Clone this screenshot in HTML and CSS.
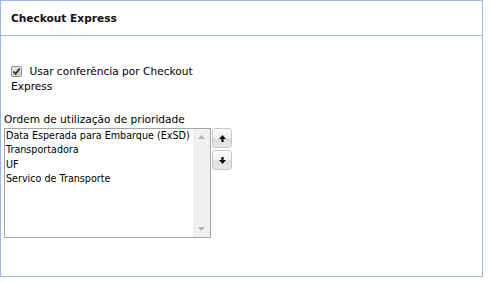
FILE: index.html
```html
<!DOCTYPE html>
<html lang="pt">
<head>
<meta charset="utf-8">
<title>Checkout Express</title>
<link rel="stylesheet" href="styles.css">
</head>
<body>
<div class="panel">
  <div class="panel-header">Checkout Express</div>
  <div class="panel-body">
    <label class="check-field">
      <span class="checkbox"><svg width="9" height="9" viewBox="0 0 9 9"><path d="M1.5 4.5 L3.6 6.8 L7.6 1.6" fill="none" stroke="#333" stroke-width="1.8"/></svg></span>
      <span class="check-label">Usar conferência por Checkout Express</span>
    </label>
    <div class="list-field">
      <div class="field-label">Ordem de utilização de prioridade</div>
      <div class="list-row">
        <div class="listbox">
          <ul class="items">
            <li>Data Esperada para Embarque (ExSD)</li>
            <li>Transportadora</li>
            <li>UF</li>
            <li>Servico de Transporte</li>
          </ul>
          <div class="scrollbar">
            <svg class="scroll-arrow" width="7" height="4" viewBox="0 0 7 4"><path d="M0 4 L3.5 0 L7 4 Z" fill="#b4b4b4"/></svg>
            <svg class="scroll-arrow" width="7" height="4" viewBox="0 0 7 4"><path d="M0 0 L3.5 4 L7 0 Z" fill="#b4b4b4"/></svg>
          </div>
        </div>
        <div class="order-buttons">
          <button class="order-btn" type="button" aria-label="Mover para cima"><svg width="9" height="9" viewBox="0 0 9 9"><path d="M4.5 1 L8 5 L5.6 5 L5.6 8 L3.4 8 L3.4 5 L1 5 Z" fill="#111"/></svg></button>
          <button class="order-btn" type="button" aria-label="Mover para baixo"><svg width="9" height="9" viewBox="0 0 9 9"><path d="M4.5 8 L8 4 L5.6 4 L5.6 1 L3.4 1 L3.4 4 L1 4 Z" fill="#111"/></svg></button>
        </div>
      </div>
    </div>
  </div>
</div>
</body>
</html>
```
FILE: styles.css
```css
* { box-sizing: border-box; }
html, body { margin: 0; padding: 0; background: #fff; }
body {
  font-family: "DejaVu Sans", Verdana, sans-serif;
  font-size: 10.6px;
  color: #000;
}
.panel {
  width: 483px;
  height: 277px;
  border: 1px solid #99bbe8;
  display: flex;
  flex-direction: column;
}
.panel-header {
  height: 35px;
  border-bottom: 1px solid #99bbe8;
  padding-left: 10px;
  display: flex;
  align-items: center;
  font-weight: bold;
  color: #111;
}
.panel-body {
  padding-top: 28px;
}
.check-field {
  display: block;
  width: 205px;
  padding-left: 10px;
  line-height: 15px;
}
.checkbox {
  display: inline-flex;
  align-items: center;
  justify-content: center;
  width: 11px;
  height: 11px;
  border: 1px solid #8f8f8f;
  border-radius: 2px;
  background: linear-gradient(#e6e6e6, #cfcfcf);
  vertical-align: -1px;
  margin-right: 4px;
}
.checkbox svg { display: block; }
.list-field {
  margin-top: 18px;
  padding-left: 3px;
}
.field-label {
  line-height: 15px;
  height: 15px;
}
.list-row {
  display: flex;
  align-items: flex-start;
  gap: 1px;
  margin-top: 1px;
}
.listbox {
  width: 207px;
  height: 110px;
  border: 1px solid #a5a5a5;
  display: flex;
  background: #fff;
}
.items {
  list-style: none;
  margin: 0;
  padding: 0 0 0 1px;
  flex: 1;
  min-width: 0;
  font-size: 9.6px;
  line-height: 14.3px;
  white-space: nowrap;
}
.scrollbar {
  width: 17px;
  flex-shrink: 0;
  background: #f0f0f0;
  display: flex;
  flex-direction: column;
  justify-content: space-between;
  align-items: center;
  padding: 6px 0 6px;
}
.scroll-arrow { display: block; }
.order-buttons {
  display: flex;
  flex-direction: column;
  gap: 2px;
}
.order-btn {
  width: 20px;
  height: 20px;
  padding: 0;
  margin: 0;
  border: 1px solid #c8c8c8;
  border-radius: 3px;
  background: linear-gradient(#fdfdfd 0%, #f1f1f1 50%, #dedede 55%, #e6e6e6 100%);
  display: flex;
  align-items: center;
  justify-content: center;
}
.order-btn svg { display: block; }
```
